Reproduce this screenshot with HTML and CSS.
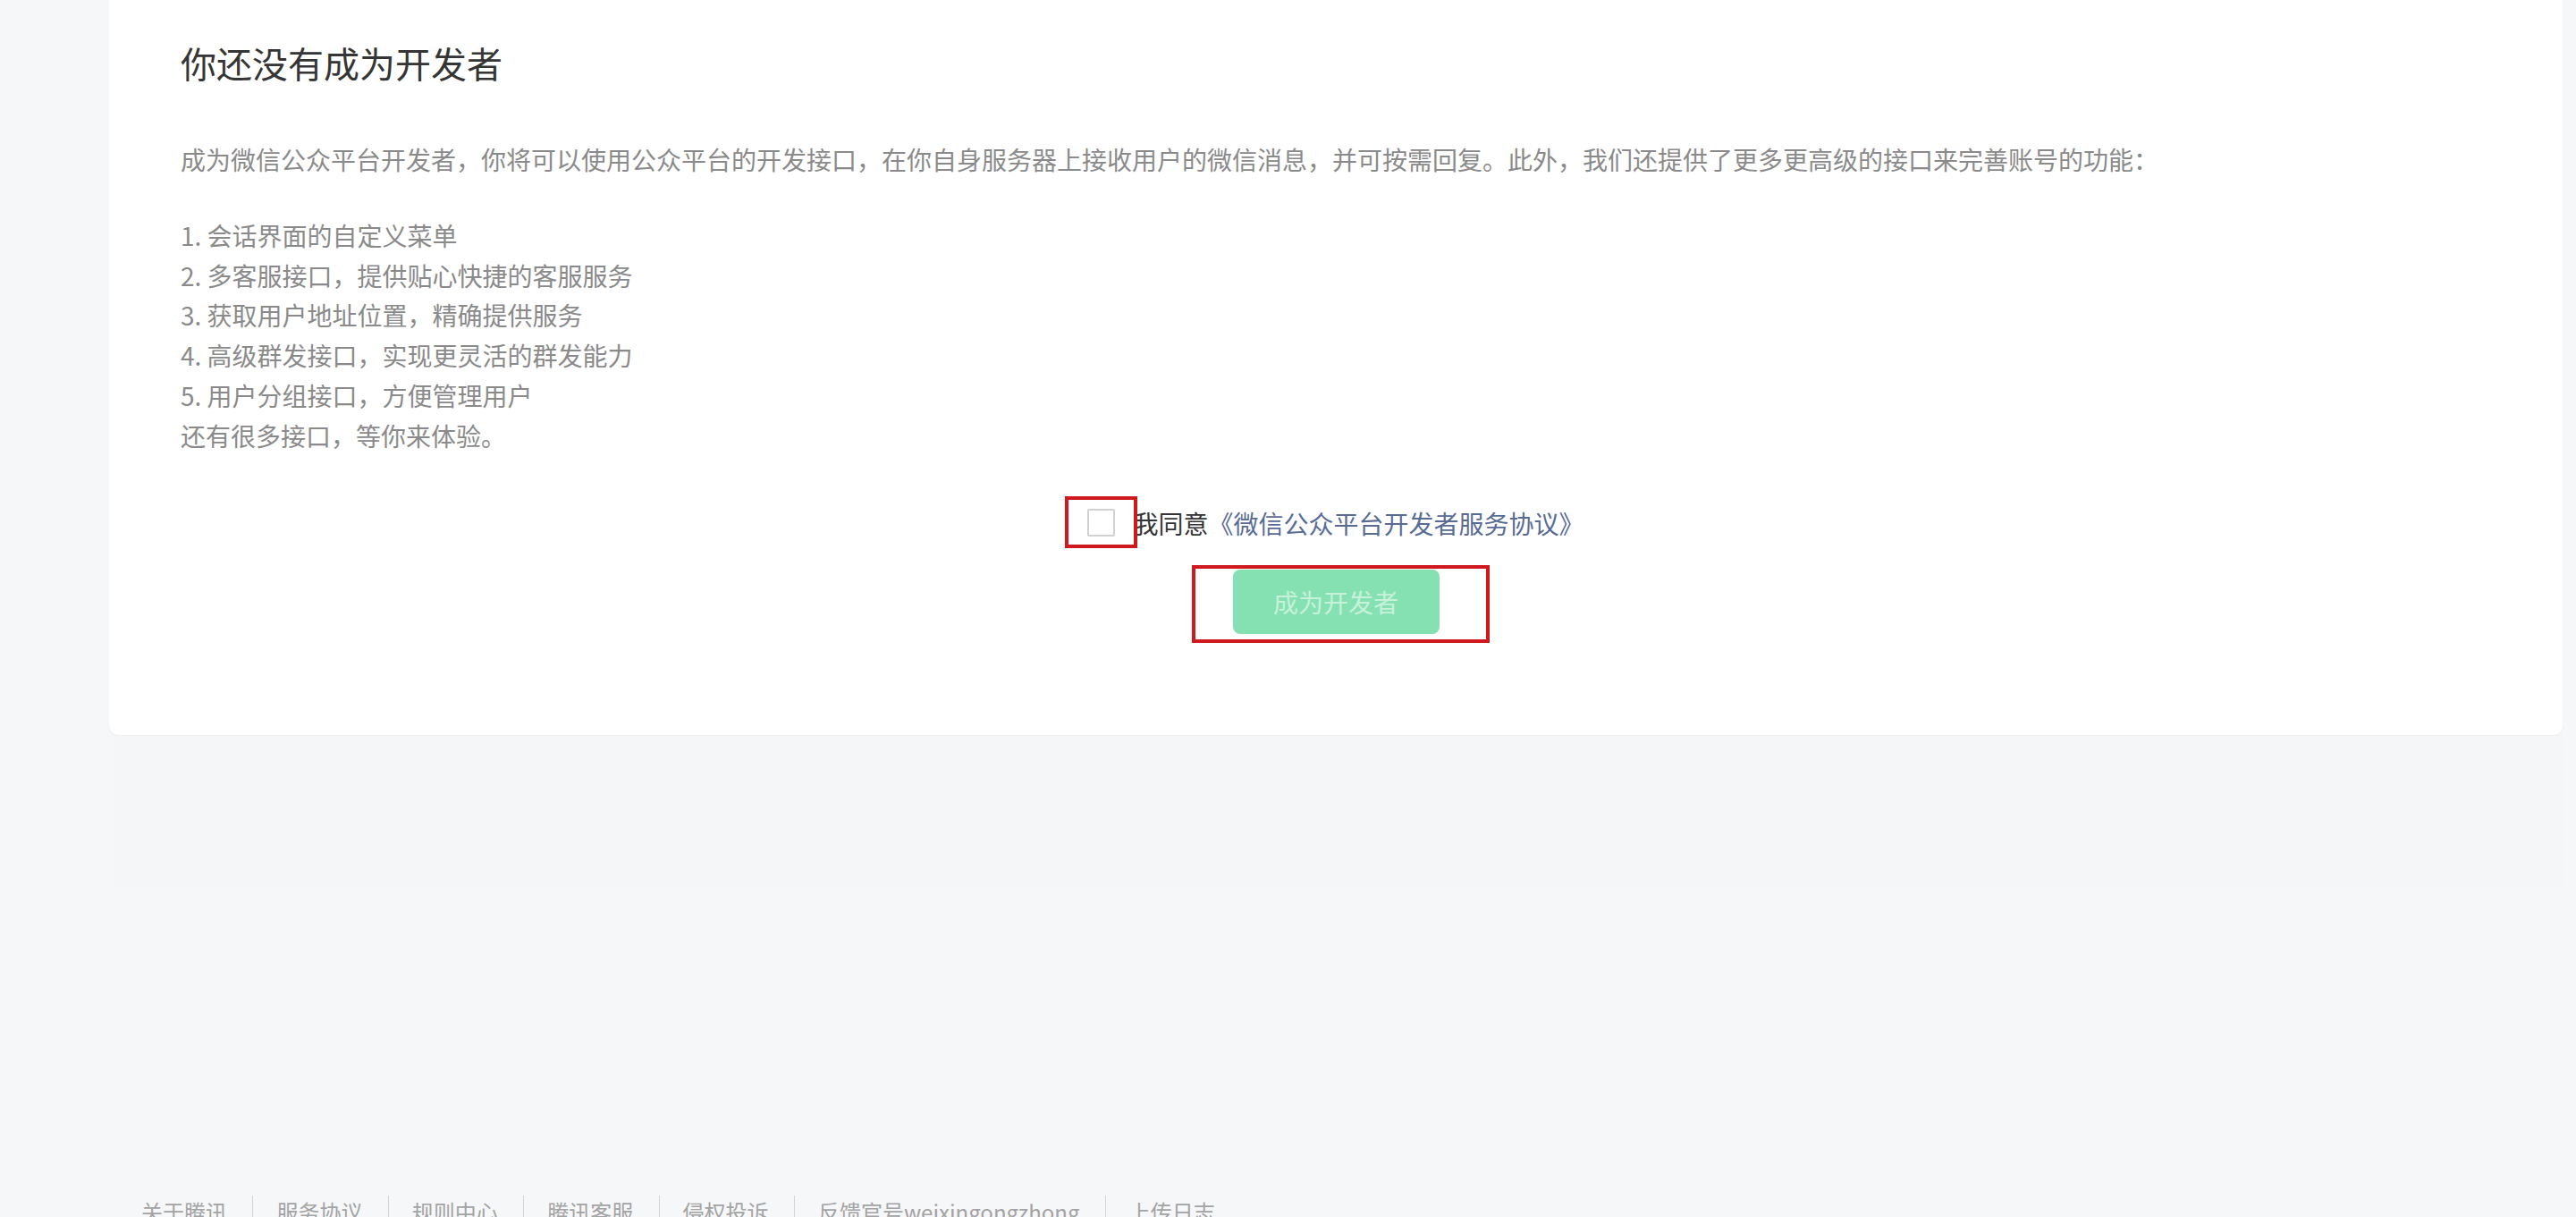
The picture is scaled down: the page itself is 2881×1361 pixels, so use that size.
FILE: index.html
```html
<!DOCTYPE html>
<html lang="zh-CN">
  <head>
    <meta charset="UTF-8" />
    <meta name="viewport" content="width=device-width, initial-scale=1.0" />
    <title>成为开发者</title>
    <link rel="stylesheet" href="styles.css">
  </head>
  <body>
    <div class="page">
      <div class="dev-card">
        <h2 class="dev-title">你还没有成为开发者</h2>
        <p class="dev-desc">成为微信公众平台开发者，你将可以使用公众平台的开发接口，在你自身服务器上接收用户的微信消息，并可按需回复。此外，我们还提供了更多更高级的接口来完善账号的功能：</p>
        <ul class="dev-list">
          <li>1. 会话界面的自定义菜单</li>
          <li>2. 多客服接口，提供贴心快捷的客服服务</li>
          <li>3. 获取用户地址位置，精确提供服务</li>
          <li>4. 高级群发接口，实现更灵活的群发能力</li>
          <li>5. 用户分组接口，方便管理用户</li>
          <li>还有很多接口，等你来体验。</li>
        </ul>

        <div class="agree-row">
          <label class="agree-check">
            <input type="checkbox" id="agree" />
            <span class="mark mark-check"></span>
          </label>
          <span class="agree-text">我同意<a href="#" class="agree-link">《微信公众平台开发者服务协议》</a></span>
        </div>

        <div class="btn-wrap">
          <button class="dev-btn" disabled>成为开发者</button>
          <span class="mark mark-btn"></span>
        </div>
      </div>

      <div class="card-tail"></div>

      <div class="footer">
        <a href="#" class="footer-link">关于腾讯</a>
        <a href="#" class="footer-link">服务协议</a>
        <a href="#" class="footer-link">规则中心</a>
        <a href="#" class="footer-link">腾讯客服</a>
        <a href="#" class="footer-link">侵权投诉</a>
        <a href="#" class="footer-link">反馈官号weixingongzhong</a>
        <a href="#" class="footer-link">上传日志</a>
      </div>
    </div>
  </body>
</html>
```

FILE: styles.css
```css
html,
body {
  margin: 0;
  overflow: hidden;
}
body {
  font-family: "Noto Sans CJK SC", "Noto Sans", sans-serif;
  background-color: #f6f7f9;
  color: #353535;
}
.page {
  padding: 0 15px 0 122px;
}
.dev-card {
  background-color: #fff;
  border-radius: 0 0 10px 10px;
  box-shadow: 0 1px 2px rgba(0, 0, 0, 0.04);
  padding: 40px 80px 113px 80px;
}
.dev-title {
  margin: 0 0 56px;
  font-size: 40px;
  line-height: 60px;
  font-weight: normal;
  color: #353535;
}
.dev-desc {
  margin: 0 0 40px;
  font-size: 28px;
  line-height: 1.6;
  color: #8a8a8a;
}
.dev-list {
  list-style: none;
  margin: 0;
  padding: 0;
  font-size: 28px;
  line-height: 1.6;
  color: #8a8a8a;
}
/* agreement line */
.agree-row {
  margin-top: 53px;
  display: flex;
  justify-content: center;
  align-items: center;
  gap: 20px;
  font-size: 28px;
  line-height: 1.6;
}
.agree-check {
  position: relative;
  display: block;
  width: 31px;
  height: 31px;
}
.agree-check input {
  appearance: none;
  -webkit-appearance: none;
  margin: 0;
  display: block;
  width: 31px;
  height: 31px;
  box-sizing: border-box;
  border: 2px solid #d2d2d2;
  border-radius: 2px;
  background-color: #fff;
}
.agree-text {
  color: #353535;
}
.agree-link {
  color: #576b95;
  text-decoration: none;
}
.btn-wrap {
  position: relative;
  width: 231px;
  margin: 30px auto 0;
}
.dev-btn {
  display: block;
  width: 231px;
  height: 72px;
  border: 0;
  border-radius: 8px;
  background-color: #86e1b2;
  color: #c6f1da;
  font-family: inherit;
  font-size: 28px;
  padding: 0;
}
/* red annotation boxes */
.mark {
  position: absolute;
  box-sizing: border-box;
  border: 4px solid #d0191f;
  pointer-events: none;
}
.mark-check {
  left: -25px;
  top: -14px;
  width: 81px;
  height: 58px;
}
.mark-btn {
  left: -46px;
  top: -5px;
  width: 333px;
  height: 87px;
}
.card-tail {
  height: 170px;
  margin-left: 6px;
  background-color: #f5f6f8;
  border-top: 1px solid #eff0f2;
}
.footer {
  margin-top: 344px;
  padding-left: 36px;
  font-size: 24px;
  line-height: 36px;
  white-space: nowrap;
}
.footer-link {
  color: #a3a3a3;
  text-decoration: none;
}
.footer-link + .footer-link {
  border-left: 1px solid #d5d5d5;
  margin-left: 23px;
  padding-left: 26px;
}
```
